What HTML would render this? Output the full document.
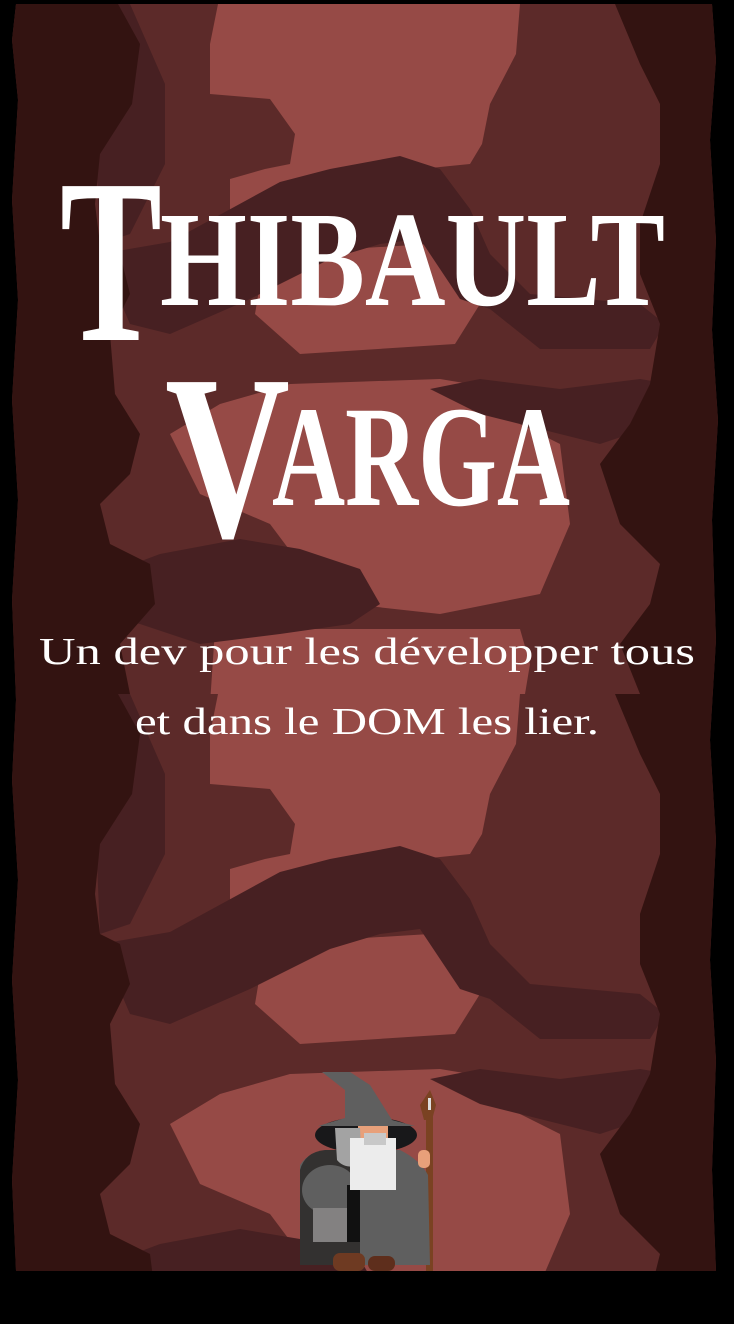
<!DOCTYPE html>
<html><head><meta charset="utf-8"><style>
html,body{margin:0;padding:0;background:#000;width:734px;height:1324px;overflow:hidden}
svg{display:block}
</style></head><body>
<svg width="734" height="1324" viewBox="0 0 734 1324" xmlns="http://www.w3.org/2000/svg">
<defs>
<clipPath id="strip"><polygon points="16,4 712,4 716,60 710,140 716,240 712,330 718,420 712,520 716,640 710,740 716,840 710,960 716,1060 712,1170 716,1271 16,1271 12,1180 18,1080 12,980 18,880 12,780 16,700 12,600 18,500 12,400 18,300 12,200 18,100 12,40"/></clipPath>
<g id="tile">
<rect x="0" y="0" width="734" height="690" fill="#5c2a29"/>
<polygon fill="#472022" points="110,0 130,0 165,80 165,160 130,230 100,240 95,120"/>
<polygon fill="#964a46" points="218,0 520,0 516,50 490,100 482,140 470,160 420,165 330,190 300,210 260,230 230,220 230,175 265,165 290,160 295,130 270,95 210,90 210,40"/>
<polygon fill="#964a46" points="265,250 430,240 470,270 480,300 455,340 300,350 255,310"/>
<polygon fill="#964a46" points="290,380 440,375 500,385 520,420 560,440 570,520 540,590 440,610 350,600 300,560 270,520 200,490 170,430 220,400"/>
<polygon fill="#964a46" points="215,625 520,625 530,660 520,720 490,760 470,780 420,790 300,800 230,780 210,700"/>
<polygon fill="#472022" points="100,250 170,238 280,178 330,165 400,152 440,165 470,205 490,250 530,290 640,300 665,320 650,345 540,345 490,305 460,295 420,235 380,240 330,255 250,295 170,330 130,320"/>
<polygon fill="#472022" points="80,580 160,550 240,535 300,545 360,565 380,600 350,620 280,630 200,640 140,620 90,610"/>
<polygon fill="#472022" points="430,385 480,375 560,385 640,375 700,385 660,420 600,440 540,425 480,410"/>
<polygon fill="#331311" points="0,0 118,0 140,40 132,100 100,150 95,200 100,240 120,250 130,290 110,330 115,390 140,430 130,470 100,500 110,540 150,560 155,600 120,640 130,690 0,690"/>
<polygon fill="#331311" points="615,0 734,0 734,690 640,690 620,640 650,600 660,560 620,520 600,460 630,420 650,380 660,320 640,270 640,220 660,160 660,100 640,60"/>
</g>
</defs>
<rect width="734" height="1324" fill="#000"/>
<g clip-path="url(#strip)">
<use href="#tile" x="0" y="4"/>
<use href="#tile" x="0" y="694"/>
</g>
<g font-family="Liberation Serif, serif" font-weight="bold" fill="#fff">
<text x="60" y="340" font-size="235" textLength="102" lengthAdjust="spacingAndGlyphs">T</text>
<text x="160" y="305" font-size="136" textLength="505" lengthAdjust="spacingAndGlyphs">HIBAULT</text>
<text x="165" y="536" font-size="235" textLength="125" lengthAdjust="spacingAndGlyphs">V</text>
<text x="272" y="505" font-size="144" textLength="298" lengthAdjust="spacingAndGlyphs">ARGA</text>
</g>
<g font-family="Liberation Serif, serif" fill="#fff" text-anchor="middle" font-size="38">
<text x="367" y="664" textLength="656" lengthAdjust="spacingAndGlyphs">Un dev pour les développer tous</text>
<text x="367" y="734" textLength="464" lengthAdjust="spacingAndGlyphs">et dans le DOM les lier.</text>
</g>
<g>
<rect x="426" y="1100" width="7" height="171" fill="#7a4222"/>
<polygon points="420,1105 430,1090 436,1105 432,1120 424,1120" fill="#7a4222"/>
<rect x="428" y="1098" width="3" height="12" fill="#ddd"/>
<path d="M300,1165 Q310,1150 330,1150 L400,1150 Q420,1160 428,1175 L430,1265 L300,1265 Z" fill="#5f5f5f"/>
<path d="M300,1170 Q305,1152 325,1150 L360,1150 L360,1265 L300,1265 Z" fill="#333130"/>
<ellipse cx="330" cy="1190" rx="28" ry="25" fill="#5f5f5f"/>
<rect x="313" y="1208" width="34" height="34" fill="#838181"/>
<rect x="347" y="1185" width="13" height="57" fill="#111"/>
<rect x="418" y="1150" width="12" height="18" rx="5" fill="#e8a07a"/>
<ellipse cx="366" cy="1135" rx="51" ry="18" fill="#18181a"/>
<polygon points="322,1072 350,1072 370,1085 392,1120 415,1126 318,1126 345,1118 345,1090" fill="#5f5f5f"/>
<rect x="358" y="1126" width="30" height="15" fill="#e8a07a"/>
<path d="M335,1128 L360,1128 L362,1165 Q345,1170 337,1160 Z" fill="#a3a3a3"/>
<path d="M350,1138 L396,1138 L396,1190 L350,1190 Z" fill="#ececec"/>
<rect x="364" y="1133" width="22" height="12" fill="#c8c8c8"/>
<rect x="333" y="1253" width="32" height="18" rx="7" fill="#6e3a22"/>
<rect x="368" y="1256" width="27" height="15" rx="7" fill="#5e2e1c"/>
</g>
</svg>
</body></html>
